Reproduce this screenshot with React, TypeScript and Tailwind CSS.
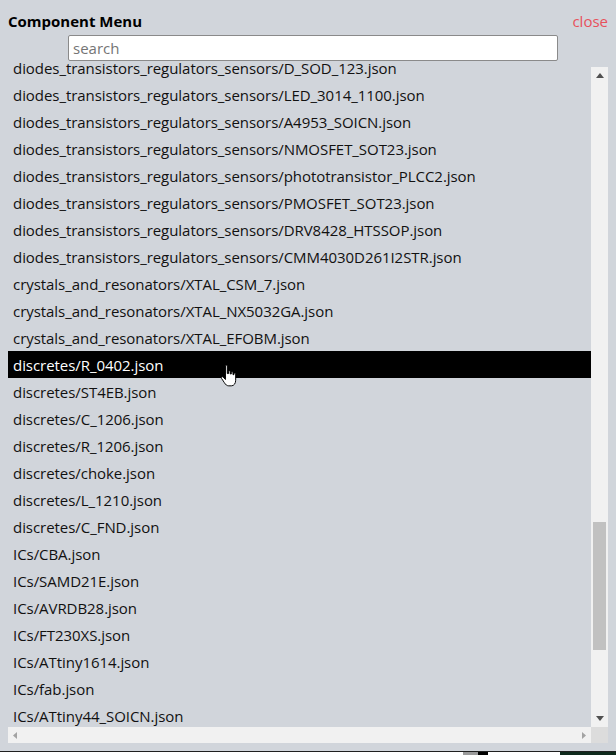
import React from 'react';

const items = [
  'diodes_transistors_regulators_sensors/D_SOD_123.json',
  'diodes_transistors_regulators_sensors/LED_3014_1100.json',
  'diodes_transistors_regulators_sensors/A4953_SOICN.json',
  'diodes_transistors_regulators_sensors/NMOSFET_SOT23.json',
  'diodes_transistors_regulators_sensors/phototransistor_PLCC2.json',
  'diodes_transistors_regulators_sensors/PMOSFET_SOT23.json',
  'diodes_transistors_regulators_sensors/DRV8428_HTSSOP.json',
  'diodes_transistors_regulators_sensors/CMM4030D261I2STR.json',
  'crystals_and_resonators/XTAL_CSM_7.json',
  'crystals_and_resonators/XTAL_NX5032GA.json',
  'crystals_and_resonators/XTAL_EFOBM.json',
  'discretes/R_0402.json',
  'discretes/ST4EB.json',
  'discretes/C_1206.json',
  'discretes/R_1206.json',
  'discretes/choke.json',
  'discretes/L_1210.json',
  'discretes/C_FND.json',
  'ICs/CBA.json',
  'ICs/SAMD21E.json',
  'ICs/AVRDB28.json',
  'ICs/FT230XS.json',
  'ICs/ATtiny1614.json',
  'ICs/fab.json',
  'ICs/ATtiny44_SOICN.json',
];

const selected = 'discretes/R_0402.json';

// mouse pointer sitting over the selected row
function HandCursor() {
  return (
    <svg width="17" height="24" viewBox="0 0 14 19" className="absolute left-[220px] top-[364px]">
      <path
        d="M4.5 1.2 C4.5 0.3 6 0.3 6 1.2 L6 7.5 L7 7.5 L7 5.8 C7 5 8.4 5 8.4 5.8 L8.4 7.8 L9.3 7.8 L9.3 6.6 C9.3 5.9 10.7 5.9 10.7 6.6 L10.7 8.4 L11.5 8.4 L11.5 7.6 C11.5 6.9 12.9 6.9 12.9 7.6 L12.9 13 C12.9 15.5 11.6 17.6 9.4 17.6 L7.2 17.6 C5.6 17.6 4.6 16.6 3.6 15 L1.2 11.4 C0.6 10.4 1.8 9.6 2.6 10.4 L4.5 12.4 Z"
        fill="white"
        stroke="black"
        strokeWidth="0.8"
      />
    </svg>
  );
}

export default function App() {
  return (
    <div className="relative w-[616px] h-[756px] flex flex-col bg-white overflow-hidden" style={{ fontFamily: '"Open Sans", "Noto Sans", sans-serif' }}>
      <div className="h-[752px] bg-[#d1d5db] border-b border-[#1f1f1f] flex flex-col">
        {/* Header */}
        <div className="flex justify-between items-center px-2 pt-[8px] h-[35px]">
          <h1 className="text-[15px] font-bold text-black leading-none">Component Menu</h1>
          <button className="text-[15px] text-[#e8515b] leading-none">close</button>
        </div>
        <div className="pl-[68px] pr-[58px] h-[27px]">
          <input
            placeholder="search"
            className="w-full h-[26px] bg-white border border-[#8a8a8a] rounded-[2px] px-[4px] text-[15px] placeholder:text-[#757575] outline-none"
          />
        </div>

        {/* List with scrollbars */}
        <div className="flex flex-col ml-2 mr-2">
          <div className="flex h-[665px]">
            <div className="flex-1 overflow-hidden relative">
              <ul className="absolute left-0 right-0 top-[-8px]">
                {items.map((item) => (
                  <li
                    key={item}
                    className={
                      item === selected
                        ? 'h-[27px] pl-[5px] pt-[1px] flex items-center bg-black text-white text-[15px] tracking-[-0.05px] whitespace-nowrap'
                        : 'h-[27px] pl-[5px] pt-[1px] flex items-center text-[#111] text-[15px] tracking-[-0.05px] whitespace-nowrap'
                    }
                  >
                    {item}
                  </li>
                ))}
              </ul>
            </div>
            <div className="w-[17px] flex flex-col pt-[5px]">
              <div className="flex-1 bg-[#f1f1f1] flex flex-col">
                <div className="h-[17px] flex items-center justify-center">
                  <svg width="8" height="5" viewBox="0 0 8 5"><path d="M0 5 L4 0 L8 5 Z" fill="#505050" /></svg>
                </div>
                <div className="flex-1 flex flex-col px-[2px]">
                  <div className="h-[438px]" />
                  <div className="h-[128px] bg-[#c1c1c1]" />
                </div>
                <div className="h-[17px] flex items-center justify-center">
                  <svg width="8" height="5" viewBox="0 0 8 5"><path d="M0 0 L8 0 L4 5 Z" fill="#505050" /></svg>
                </div>
              </div>
            </div>
          </div>
          <div className="flex h-[16px]">
            <div className="flex-1 bg-[#f1f1f1] flex items-center justify-between px-[5px]">
              <svg width="4" height="7" viewBox="0 0 4 7"><path d="M4 0 L0 3.5 L4 7 Z" fill="#a3a3a3" /></svg>
              <svg width="4" height="7" viewBox="0 0 4 7"><path d="M0 0 L4 3.5 L0 7 Z" fill="#a3a3a3" /></svg>
            </div>
            <div className="w-[17px] bg-[#dcdcdc]" />
          </div>
        </div>
      </div>
      <div className="flex h-[3px]">
        <div className="w-[463px] bg-white" />
        <div className="w-[15px] bg-[#9a9a9a]" />
        <div className="w-[10px] bg-black" />
        <div className="w-[72px] bg-white" />
        <div className="flex-1 bg-[#0f2a1c]" />
      </div>
      <HandCursor />
    </div>
  );
}
